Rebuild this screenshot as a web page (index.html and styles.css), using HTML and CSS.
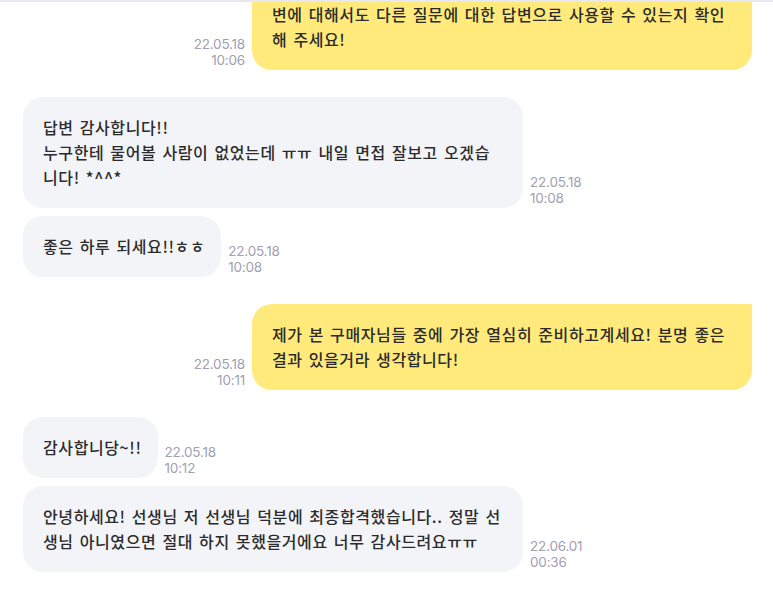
FILE: index.html
```html
<!DOCTYPE html>
<html lang="ko">
<head>
    <meta charset="UTF-8">
    <meta name="viewport" content="width=device-width, initial-scale=1.0">
    <title>메시지</title>
    <link rel="stylesheet" href="styles.css">
</head>
<body>
    <div class="chat">
        <ul class="messages">
            <li class="msg msg--mine">
                <span class="msg__time">22.05.18<br>10:06</span>
                <p class="msg__bubble msg__bubble--full">변에 대해서도 다른 질문에 대한 답변으로 사용할 수 있는지 확인<br>해 주세요!</p>
            </li>
            <li class="msg msg--theirs msg--new">
                <p class="msg__bubble msg__bubble--full">답변 감사합니다!!<br>누구한테 물어볼 사람이 없었는데 ㅠㅠ 내일 면접 잘보고 오겠습<br>니다! *^^*</p>
                <span class="msg__time">22.05.18<br>10:08</span>
            </li>
            <li class="msg msg--theirs">
                <p class="msg__bubble">좋은 하루 되세요!!ㅎㅎ</p>
                <span class="msg__time">22.05.18<br>10:08</span>
            </li>
            <li class="msg msg--mine msg--new">
                <span class="msg__time">22.05.18<br>10:11</span>
                <p class="msg__bubble msg__bubble--full">제가 본 구매자님들 중에 가장 열심히 준비하고계세요! 분명 좋은<br>결과 있을거라 생각합니다!</p>
            </li>
            <li class="msg msg--theirs msg--new">
                <p class="msg__bubble">감사합니당~!!</p>
                <span class="msg__time">22.05.18<br>10:12</span>
            </li>
            <li class="msg msg--theirs">
                <p class="msg__bubble msg__bubble--full">안녕하세요! 선생님 저 선생님 덕분에 최종합격했습니다.. 정말 선<br>생님 아니였으면 절대 하지 못했을거에요 너무 감사드려요ㅠㅠ</p>
                <span class="msg__time">22.06.01<br>00:36</span>
            </li>
        </ul>
    </div>
</body>
</html>
```
FILE: styles.css
```css
body {
    margin: 0;
    padding: 0;
    background-color: #fff;
    font-family: "Noto Sans CJK KR", "Noto Sans", sans-serif;
    color: #2b2b2b;
}
.chat {
    height: 587px;
    border-top: 2px solid #e8e8f3;
    overflow: hidden;
}
.messages {
    list-style: none;
    margin: -18px 0 0 0;
    padding: 0 21px 0 23px;
}
.msg {
    display: flex;
    align-items: flex-end;
    gap: 7px;
    margin-top: 8px;
}
.msg:first-child {
    margin-top: 0;
}
.msg--new {
    margin-top: 27px;
}
.msg--mine {
    justify-content: flex-end;
}
.msg__bubble {
    margin: 0;
    max-width: 500px;
    box-sizing: border-box;
    padding: 18px 16px 18px 20px;
    border-radius: 20px;
    font-size: 16px;
    font-weight: 500;
    line-height: 25px;
    letter-spacing: 0.6px;
    word-spacing: 1px;
    word-break: break-all;
}
.msg__bubble--full {
    width: 500px;
}
.msg--mine .msg__bubble {
    background-color: #ffea7b;
    border-top-right-radius: 0;
}
.msg--theirs .msg__bubble {
    background-color: #f3f4f8;
}
.msg__time {
    flex-shrink: 0;
    margin-bottom: 2px;
    font-family: Inter, "Noto Sans", sans-serif;
    font-size: 13.5px;
    line-height: 16px;
    letter-spacing: -0.2px;
    color: #9fa0b3;
}
.msg--mine .msg__time {
    text-align: right;
}
```
